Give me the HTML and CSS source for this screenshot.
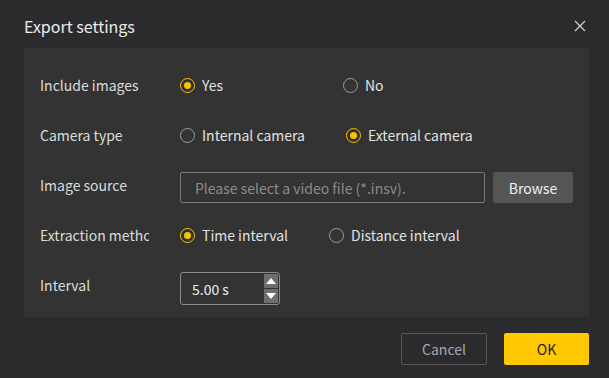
FILE: index.html
```html
<!DOCTYPE html>
<html lang="en">
<head>
  <meta charset="UTF-8" />
  <title>Export settings</title>
  <link rel="stylesheet" href="styles.css">
</head>
<body>

  <div class="dialog">
    <header class="dialog-header">
      <h1>Export settings</h1>
      <button class="close-btn" aria-label="Close">
        <svg width="12" height="12" viewBox="0 0 12 12">
          <path d="M1 1 L11 11 M11 1 L1 11" stroke="#d0d0d0" stroke-width="1.3" fill="none" />
        </svg>
      </button>
    </header>

    <div class="panel">
      <div class="row">
        <span class="label">Include images</span>
        <div class="options">
          <label class="option wide"><span class="radio checked"></span>Yes</label>
          <label class="option"><span class="radio"></span>No</label>
        </div>
      </div>

      <div class="row">
        <span class="label">Camera type</span>
        <div class="options">
          <label class="option"><span class="radio"></span>Internal camera</label>
          <label class="option"><span class="radio checked"></span>External camera</label>
        </div>
      </div>

      <div class="row">
        <span class="label">Image source</span>
        <div class="file-field">
          <input type="text" class="file-input" placeholder="Please select a video file (*.insv)." />
          <button class="browse-btn">Browse</button>
        </div>
      </div>

      <div class="row">
        <span class="label">Extraction method</span>
        <div class="options">
          <label class="option"><span class="radio checked"></span>Time interval</label>
          <label class="option"><span class="radio"></span>Distance interval</label>
        </div>
      </div>

      <div class="row">
        <span class="label">Interval</span>
        <div class="spinbox">
          <span class="spin-value">5.00 s</span>
          <div class="spin-arrows">
            <span class="spin-btn"><svg width="10" height="6" viewBox="0 0 10 6"><path d="M0 6 L5 0 L10 6 Z" fill="#fff" /></svg></span>
            <span class="spin-btn"><svg width="10" height="6" viewBox="0 0 10 6"><path d="M0 0 L10 0 L5 6 Z" fill="#fff" /></svg></span>
          </div>
        </div>
      </div>
    </div>

    <footer class="dialog-footer">
      <button class="cancel-btn">Cancel</button>
      <button class="ok-btn">OK</button>
    </footer>
  </div>

</body>
</html>
```

FILE: styles.css
```css
body {
  font-family: "Noto Sans CJK SC", "Noto Sans", sans-serif;
  background: #2b2b2d;
  margin: 0;
  padding: 0;
}

.dialog {
  width: 609px;
  height: 378px;
  background: #2b2b2d;
}

.dialog-header {
  height: 48px;
  box-sizing: border-box;
  padding: 4px 24px 0 24px;
  display: flex;
  align-items: center;
  justify-content: space-between;
}

.dialog-header h1 {
  margin: 0;
  font-size: 16px;
  font-weight: normal;
  line-height: 22px;
  color: #ececec;
}

.close-btn {
  background: none;
  border: none;
  padding: 0;
  margin-right: -1px;
  width: 12px;
  height: 12px;
  display: flex;
  cursor: pointer;
}

.panel {
  margin: 0 20px 0 24px;
  background: #333333;
  padding: 12px 0 7px 16px;
  height: 269px;
  box-sizing: border-box;
}

.row {
  height: 50px;
  display: flex;
  align-items: center;
}

.label {
  width: 109px;
  margin-right: 31px;
  overflow: hidden;
  white-space: nowrap;
  font-size: 14px;
  line-height: 20px;
  color: #dcdcdc;
}

.options {
  display: flex;
  align-items: center;
  gap: 41px;
}

.option {
  display: flex;
  align-items: center;
  gap: 7px;
  font-size: 14px;
  line-height: 20px;
  color: #e2e2e2;
}

.option.wide {
  min-width: 122px;
}

.radio {
  width: 15px;
  height: 15px;
  box-sizing: border-box;
  border: 1.5px solid #9c9c9c;
  border-radius: 50%;
  display: flex;
  align-items: center;
  justify-content: center;
}

.radio.checked {
  border-color: #f5c400;
}

.radio.checked::after {
  content: "";
  width: 7px;
  height: 7px;
  border-radius: 50%;
  background: #f5c400;
}

.file-field {
  display: flex;
  gap: 8px;
  margin-top: 5px;
}

.file-input {
  width: 305px;
  height: 31px;
  box-sizing: border-box;
  background: transparent;
  border: 1px solid #7a7a7a;
  border-radius: 2px;
  padding: 0 14px;
  font-family: inherit;
  font-size: 14px;
  color: #e0e0e0;
}

.file-input::placeholder {
  color: #8c8c8c;
}

.browse-btn {
  width: 80px;
  height: 31px;
  background: #555555;
  border: none;
  border-radius: 2px;
  font-family: inherit;
  font-size: 14px;
  color: #f0f0f0;
}

.spinbox {
  width: 100px;
  height: 33px;
  box-sizing: border-box;
  margin-top: 6px;
  border: 1px solid #8a8a8a;
  border-radius: 3px;
  display: flex;
  align-items: center;
  justify-content: space-between;
  padding: 0 1px 0 11px;
}

.spin-value {
  font-size: 14px;
  line-height: 20px;
  color: #ececec;
  margin-top: 1px;
}

.spin-arrows {
  display: flex;
  flex-direction: column;
  gap: 1px;
}

.spin-btn {
  width: 14px;
  height: 14px;
  background: #6e6e6e;
  display: flex;
  align-items: center;
  justify-content: center;
}

.dialog-footer {
  display: flex;
  justify-content: flex-end;
  gap: 17px;
  padding: 16px 20px 0 0;
}

.cancel-btn,
.ok-btn {
  height: 32px;
  border-radius: 2px;
  font-family: inherit;
  font-size: 14px;
  cursor: pointer;
}

.cancel-btn {
  width: 86px;
  background: transparent;
  border: 1px solid #575757;
  color: #a4a8ae;
}

.ok-btn {
  width: 85px;
  background: #ffc800;
  border: none;
  color: #1e1e1e;
}
```
